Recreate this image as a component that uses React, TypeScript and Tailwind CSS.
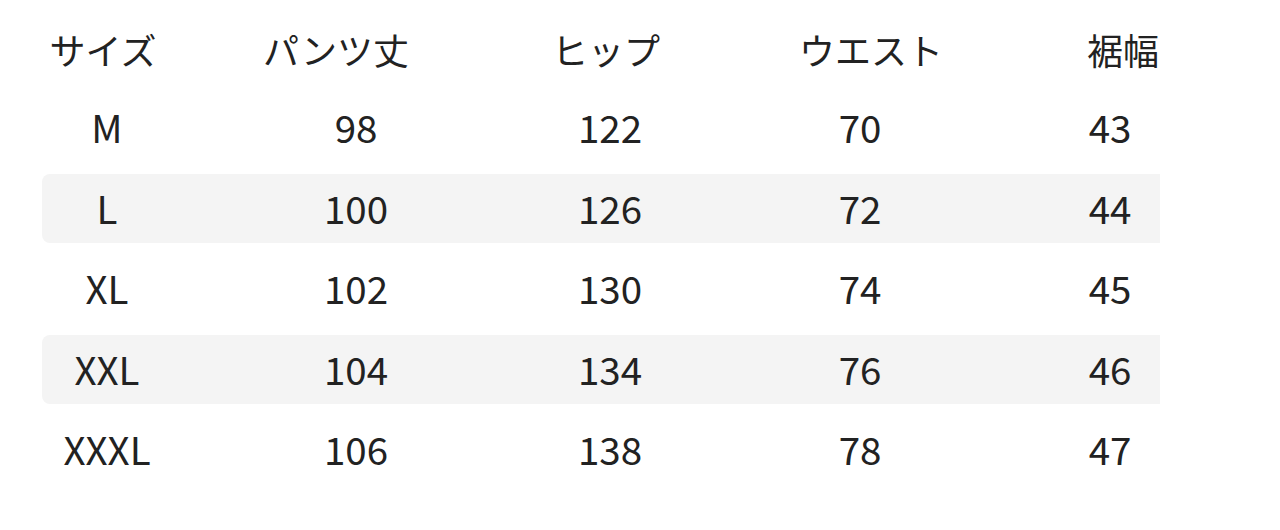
import React from "react";

const headers = ["サイズ", "パンツ丈", "ヒップ", "ウエスト", "裾幅"];
const rows = [
  ["M", "98", "122", "70", "43"],
  ["L", "100", "126", "72", "44"],
  ["XL", "102", "130", "74", "45"],
  ["XXL", "104", "134", "76", "46"],
  ["XXXL", "106", "138", "78", "47"],
];

export default function App() {
  return (
    <div
      className="w-[1280px] h-[530px] bg-white text-[#222222] pt-[11px]"
      style={{ fontFamily: '"Noto Sans CJK JP", "Noto Sans", sans-serif' }}
    >
      <div className="grid grid-cols-[122px_344px_196px_334px_170px] ml-[42px] h-[77px] items-center text-[36px] leading-none pb-[2px]">
        {headers.map((h) => (
          <div key={h} className="text-center whitespace-nowrap">
            {h}
          </div>
        ))}
      </div>
      {rows.map((r, i) => (
        <div key={r[0]} className="ml-[42px] w-[1118px] h-[80.5px] flex items-center">
          <div
            className={`w-full h-[69px] rounded-l-[8px] grid grid-cols-[130px_368px_140px_360px_140px] items-center text-[38.5px] leading-none pb-[4px] ${
              i % 2 === 1 ? "bg-[#f4f4f4]" : ""
            }`}
          >
            {r.map((c, j) => (
              <div key={j} className="text-center">
                {c}
              </div>
            ))}
          </div>
        </div>
      ))}
    </div>
  );
}
